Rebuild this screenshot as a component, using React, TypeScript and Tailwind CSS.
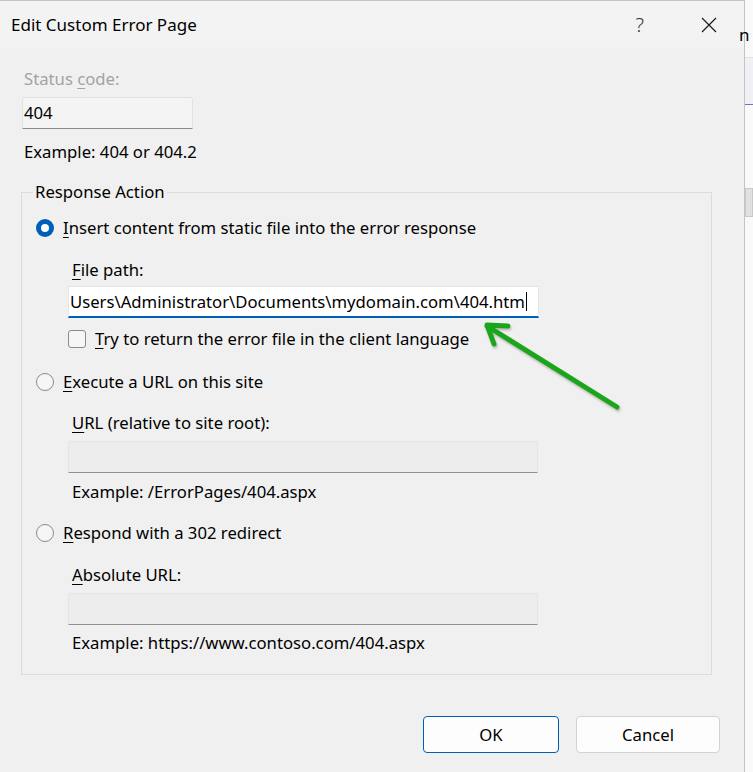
import React from "react";

const Key = ({ children }: { children: React.ReactNode }) => (
  <span className="underline decoration-1 underline-offset-[3px]">{children}</span>
);

const Radio = ({ checked }: { checked?: boolean }) =>
  checked ? (
    <span className="flex h-[18px] w-[18px] shrink-0 items-center justify-center rounded-full bg-[#005fb8]">
      <span className="h-[8px] w-[8px] rounded-full bg-white" />
    </span>
  ) : (
    <span className="h-[18px] w-[18px] shrink-0 rounded-full border border-[#8b8b8b] bg-[#f6f6f6]" />
  );

const EmptyBox = () => (
  <div className="h-[32px] w-[470px] rounded-t-[3px] border border-[#e4e4e4] border-b-[#8f8f8f] bg-[#ededed]" />
);

export default function App() {
  return (
    <div className="relative flex h-[772px] w-[753px] overflow-hidden bg-[#f9f9f9] font-['Noto_Sans','Open_Sans',sans-serif] text-[16.7px] leading-[22px] text-black">
      {/* dialog */}
      <div className="flex w-[745px] shrink-0 flex-col border-t border-r border-[#c4c4c4] bg-[#f0f0f0]">
        {/* title bar */}
        <div className="flex h-[47px] shrink-0 items-center bg-[#f3f3f3] pl-[11px]">
          <span className="flex-1 text-[17px]">Edit Custom Error Page</span>
          <span className="mr-[57px] text-[20px] font-light text-[#333]">?</span>
          <svg width="16" height="16" viewBox="0 0 16 16" className="mr-[27px]">
            <path d="M1 1 L15 15 M15 1 L1 15" stroke="#1a1a1a" strokeWidth="1.2" />
          </svg>
        </div>

        {/* body */}
        <div className="flex flex-1 flex-col pl-[21px]">
          <div className="ml-[3px] mt-[20px] text-[#a3a3a3]">
            Status <Key>c</Key>ode:
          </div>
          <div className="ml-[1px] mt-[7px] flex h-[32px] w-[171px] items-center rounded-t-[3px] border border-[#e2e2e2] border-b-[#8a8a8a] bg-[#f4f4f4] pl-[1px]">
            404
          </div>
          <div className="ml-[3px] mt-[12px]">Example: 404 or 404.2</div>

          <fieldset className="mt-[18px] w-[691px] border border-[#dcdcdc] pb-[20px]">
            <legend className="ml-[11px] px-[2px]">Response Action</legend>

            <div className="mt-[14px] flex items-center gap-[9px] pl-[14px]">
              <Radio checked />
              <span>
                <Key>I</Key>nsert content from static file into the error response
              </span>
            </div>
            <div className="ml-[46px] flex flex-col">
              <div className="ml-[4px] mt-[20px]">
                <Key>F</Key>ile path:
              </div>
              <div className="mt-[5px] flex h-[32px] w-[471px] items-center overflow-hidden border border-[#e6e6e6] border-b-2 border-b-[#005fb8] bg-white pl-[1px]">
                <span className="whitespace-nowrap">Users\Administrator\Documents\mydomain.com\404.htm</span>
                <span className="ml-[1px] h-[19px] w-px shrink-0 bg-black" />
              </div>
              <div className="mt-[10px] flex items-center gap-[9px]">
                <span className="h-[18px] w-[18px] shrink-0 rounded-[3px] border border-[#8b8b8b] bg-[#f6f6f6]" />
                <span>
                  <Key>T</Key>ry to return the error file in the client language
                </span>
              </div>
            </div>

            <div className="mt-[21px] flex items-center gap-[9px] pl-[14px]">
              <Radio />
              <span>
                <Key>E</Key>xecute a URL on this site
              </span>
            </div>
            <div className="ml-[46px] flex flex-col">
              <div className="ml-[4px] mt-[19px]">
                <Key>U</Key>RL (relative to site root):
              </div>
              <div className="mt-[7px]">
                <EmptyBox />
              </div>
              <div className="ml-[4px] mt-[8px]">Example: /ErrorPages/404.aspx</div>
            </div>

            <div className="mt-[19px] flex items-center gap-[9px] pl-[14px]">
              <Radio />
              <span>
                <Key>R</Key>espond with a 302 redirect
              </span>
            </div>
            <div className="ml-[46px] flex flex-col">
              <div className="ml-[4px] mt-[20px]">
                <Key>A</Key>bsolute URL:
              </div>
              <div className="mt-[7px]">
                <EmptyBox />
              </div>
              <div className="ml-[4px] mt-[7px]">Example: https://www.contoso.com/404.aspx</div>
            </div>
          </fieldset>

          <div className="mr-[24px] mt-[41px] flex justify-end gap-[17px]">
            <button className="h-[37px] w-[136px] rounded-[4px] border border-[#005fb8] bg-[#fdfdfd]">OK</button>
            <button className="h-[37px] w-[144px] rounded-[4px] border border-[#d3d3d3] bg-[#fdfdfd]">Cancel</button>
          </div>
        </div>
      </div>

      {/* window behind the dialog */}
      <div className="flex flex-1 flex-col bg-[#f9f9f9]">
        <div className="ml-[-6px] mt-[24px] h-[22px] text-[17px]">n</div>
        <div className="mt-[11px] h-[48px] border-y border-[#e0e0e0] border-b-[#7d6fb8] bg-[#f2f0f7]" />
        <div className="mt-[83px] h-[29px] border border-[#c9c9c9] bg-[#e1e1e1]" />
      </div>

      {/* green annotation arrow */}
      <svg
        className="pointer-events-none absolute left-[480px] top-[315px] drop-shadow-[1px_2px_1px_rgba(0,0,0,0.25)]"
        width="150"
        height="100"
        viewBox="0 0 150 100"
      >
        <path
          d="M137 92 L7 11 M28 11 L7 10 L14 29"
          fill="none"
          stroke="#1ba51b"
          strokeWidth="5"
          strokeLinecap="round"
          strokeLinejoin="round"
        />
      </svg>
    </div>
  );
}
